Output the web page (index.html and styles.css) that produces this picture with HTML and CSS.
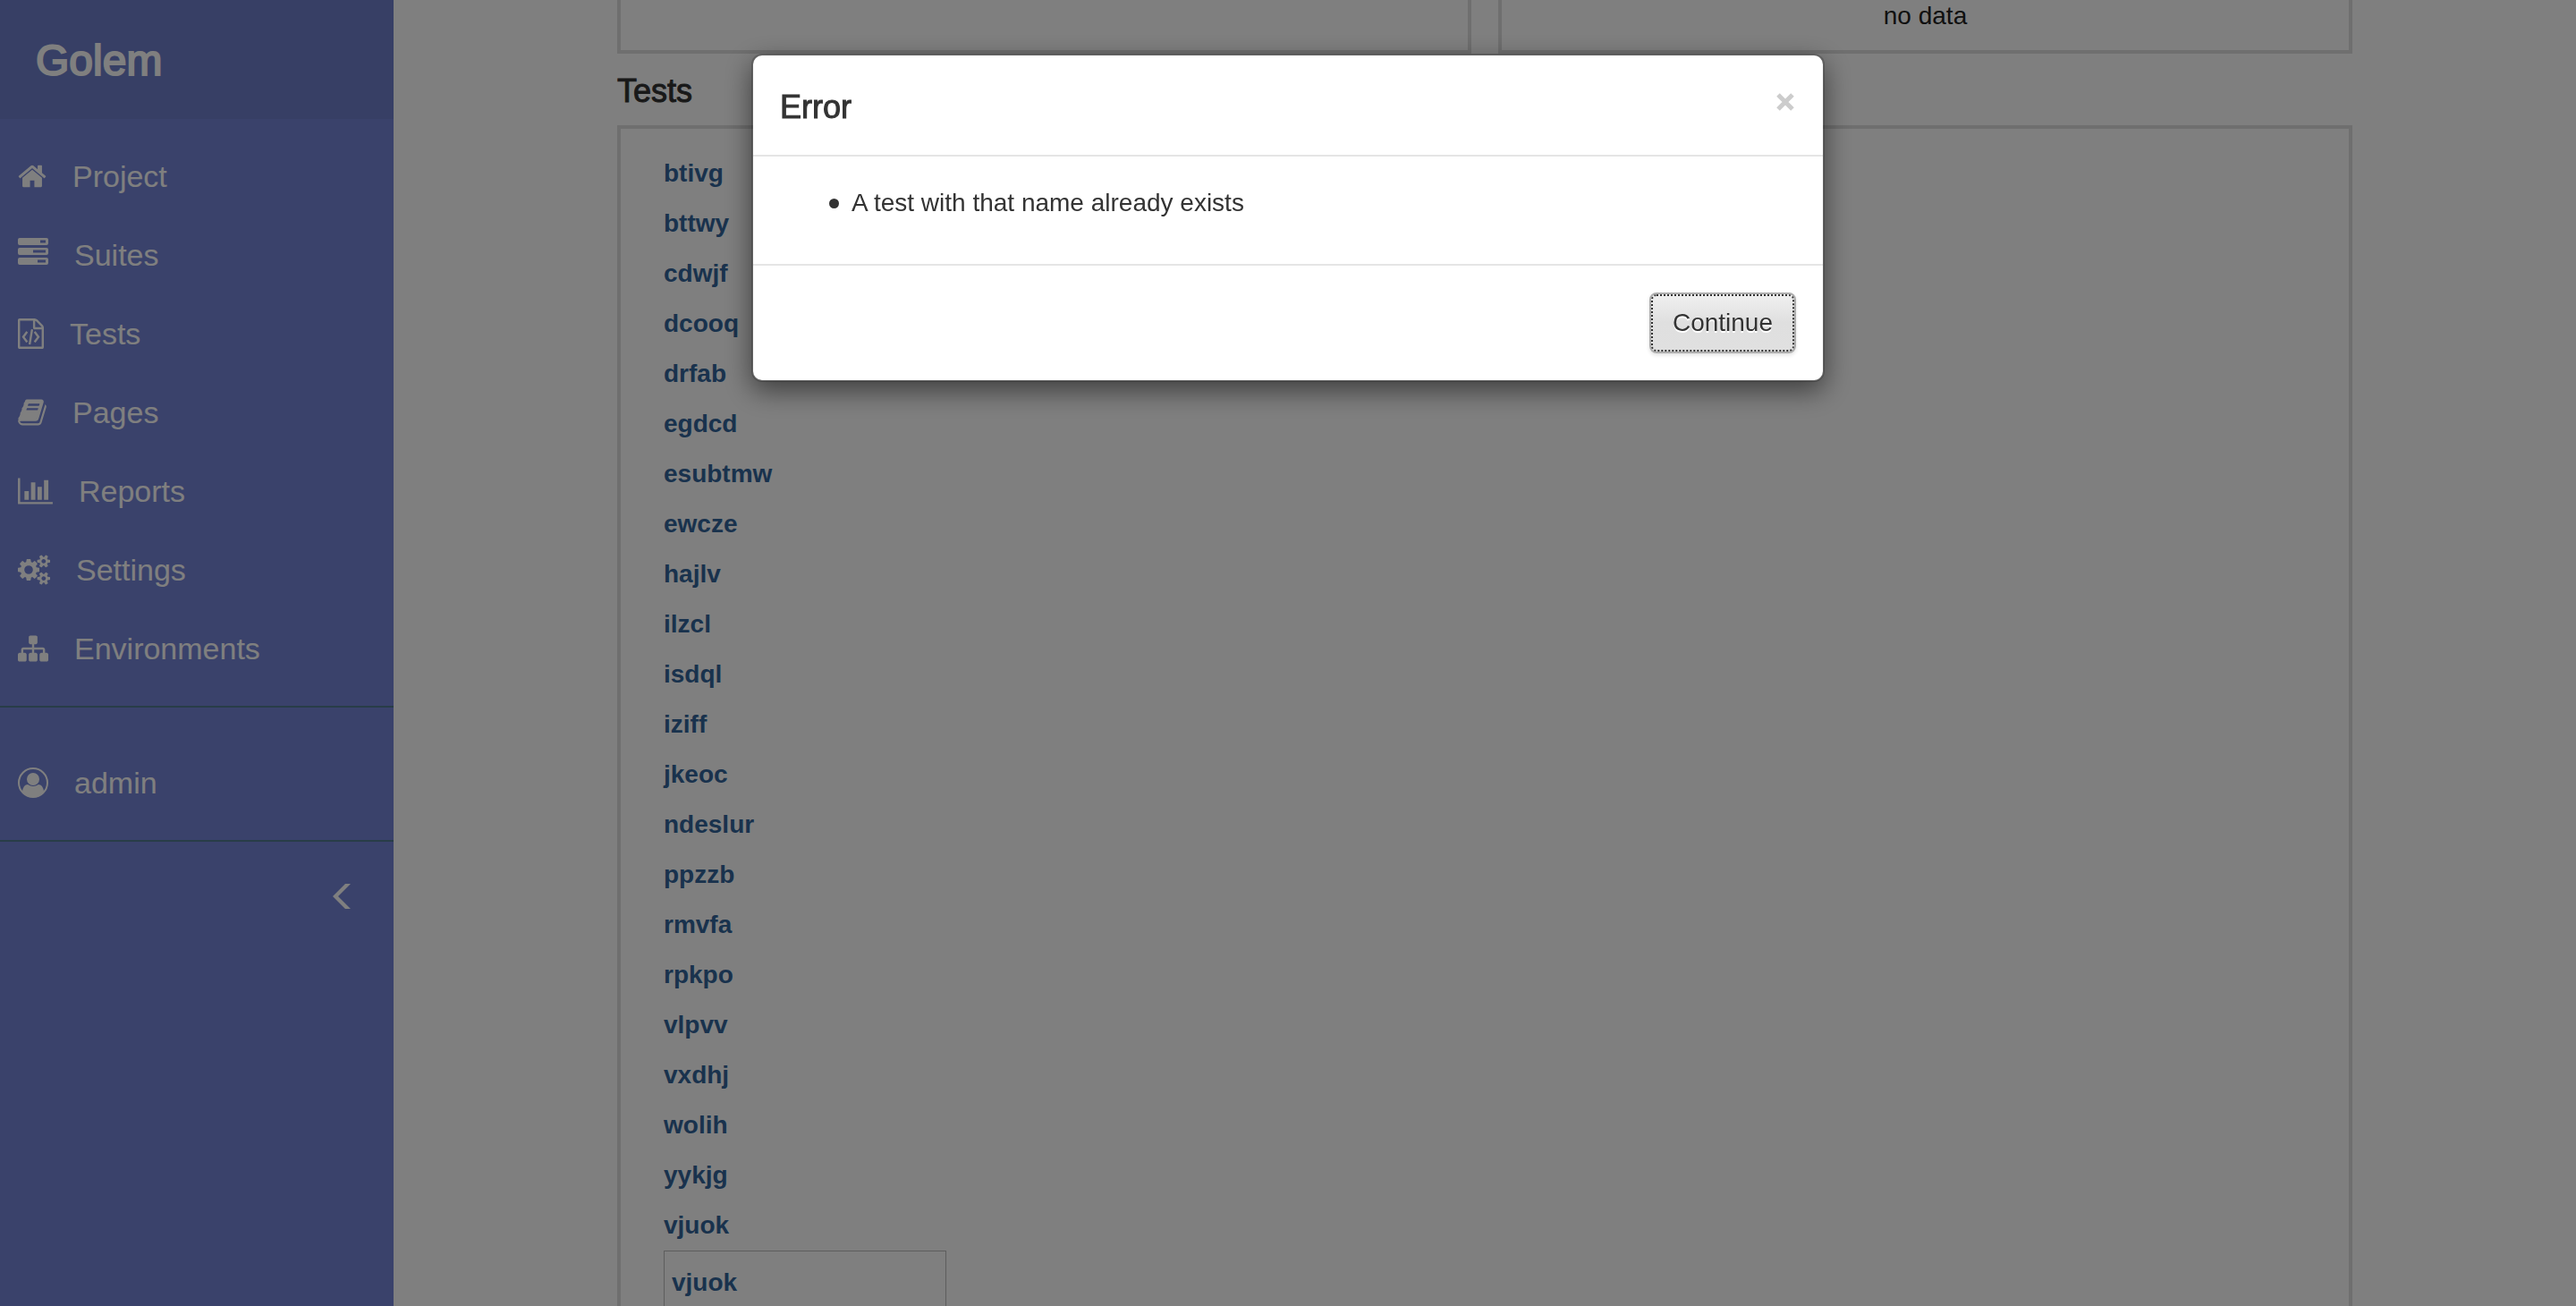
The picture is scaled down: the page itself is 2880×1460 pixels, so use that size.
FILE: index.html
```html
<!DOCTYPE html>
<html lang="en">
<head>
<meta charset="utf-8">
<title>Golem</title>
<meta name="viewport" content="width=device-width, initial-scale=1">
<link rel="stylesheet" href="styles.css">
</head>
<body>
<div class="app">
  <aside class="sidebar">
    <div class="brand">Golem</div>
    <ul class="nav">
      <li><a href="#"><svg width="32" height="34" viewBox="64 0 1664 1792"><path d="M1472 992v480q0 26-19 45t-45 19h-384v-384h-256v384h-384q-26 0-45-19t-19-45v-480q0-1 .5-3t.5-3l575-474 575 474q1 2 1 6zm223-69l-62 74q-8 9-21 11h-3q-13 0-21-7l-692-577-692 577q-12 8-24 7-13-2-21-11l-62-74q-8-10-7-23.5t11-21.5l719-599q32-26 76-26t76 26l244 204v-195q0-14 9-23t23-9h192q14 0 23 9t9 23v408l219 182q10 8 11 21.5t-7 23.5z"/></svg>Project</a></li>
      <li><a href="#"><svg width="34" height="42" viewBox="0 0 34 42"><path fill-rule="evenodd" d="M2 2h30a2 2 0 0 1 2 2v4a2 2 0 0 1-2 2h-30a2 2 0 0 1-2-2v-4a2 2 0 0 1 2-2zM25 4.500v3h6v-3zM2 13h30a2 2 0 0 1 2 2v4a2 2 0 0 1-2 2h-30a2 2 0 0 1-2-2v-4a2 2 0 0 1 2-2zM17 15.500v3h14v-3zM2 24h30a2 2 0 0 1 2 2v4a2 2 0 0 1-2 2h-30a2 2 0 0 1-2-2v-4a2 2 0 0 1 2-2zM22 26.500v3h9v-3z"/></svg>Suites</a></li>
      <li><a href="#"><svg width="29" height="34" viewBox="128 0 1536 1792"><path d="M1596 380q28 28 48 76t20 88v1152q0 40-28 68t-68 28h-1344q-40 0-68-28t-28-68v-1600q0-40 28-68t68-28h896q40 0 88 20t76 48zm-444-244v376h376q-10-29-22-41l-313-313q-12-12-41-22zm384 1528v-1024h-416q-40 0-68-28t-28-68v-416h-768v1536h1280zm-928-896q8-11 21-12.5t24 6.5l51 38q11 8 12.5 21t-6.5 24l-182 243 182 243q8 11 6.5 24t-12.5 21l-51 38q-11 8-24 6.5t-21-12.5l-226-301q-14-19 0-38zm802 301q14 19 0 38l-226 301q-8 11-21 12.5t-24-6.5l-51-38q-11-8-12.5-21t6.5-24l182-243-182-243q-8-11-6.5-24t12.5-21l51-38q11-8 24-6.5t21 12.5zm-620 461q-13-2-20.5-13t-5.5-24l138-831q2-13 13-20.5t24-5.5l63 10q13 2 20.5 13t5.5 24l-138 831q-2 13-13 20.5t-24 5.5z"/></svg>Tests</a></li>
      <li><a href="#"><svg width="32" height="34" viewBox="64 0 1664 1792"><path d="M1703 478q40 57 18 129l-275 906q-19 64-76.500 107.500t-122.500 43.500h-923q-77 0-148.500-53.500t-99.500-131.500q-24-67-2-127 0-4 3-27t4-37q1-8-3-21.500t-3-19.500q2-11 8-21t16.500-23.500 16.500-23.500q23-38 45-91.500t30-91.500q3-10 .5-30t-.5-28q3-11 17-28t17-23q21-36 42-92t25-90q1-9-2.500-32t.5-28q4-13 22-30.500t22-22.500q19-26 42.500-84.500t27.500-96.500q1-8-3-25.500t-2-26.500q2-8 9-18t18-23 17-21q8-12 16.500-30.500t15-35 16-36 19.500-32 26.500-23.500 36-11.500 47.500 5.500l-1 3q38-9 51-9h761q74 0 114 56t18 130l-274 906q-36 119-71.500 153.500t-128.500 34.500h-869q-27 0-38 15-11 16-1 43 24 70 144 70h923q29 0 56-15.500t35-41.500l300-987q7-22 5-57 38 15 59 43zm-1064 2q-4 13 2 22.500t20 9.500h608q13 0 25.500-9.500t16.500-22.500l21-64q4-13-2-22.500t-20-9.500h-608q-13 0-25.500 9.500t-16.500 22.500zm-83 256q-4 13 2 22.500t20 9.500h608q13 0 25.500-9.500t16.500-22.500l21-64q4-13-2-22.500t-20-9.500h-608q-13 0-25.500 9.500t-16.500 22.500z"/></svg>Pages</a></li>
      <li><a href="#"><svg width="39" height="34" viewBox="0 0 2048 1792"><path d="M640 896v512h-256v-512h256zm384-512v1024h-256v-1024h256zm1024 1152v128h-2048v-1536h128v1408h1920zm-640-896v768h-256v-768h256zm384-384v1152h-256v-1152h256z"/></svg>Reports</a></li>
      <li><a href="#"><svg width="36" height="34" viewBox="0 0 1920 1792"><path d="M896 896q0-106-75-181t-181-75-181 75-75 181 75 181 181 75 181-75 75-181zm768 512q0-52-38-90t-90-38-90 38-38 90q0 53 37.500 90.500t90.500 37.500 90.500-37.500 37.500-90.500zm0-1024q0-52-38-90t-90-38-90 38-38 90q0 53 37.500 90.500t90.500 37.500 90.500-37.500 37.500-90.500zm-384 421v185q0 10-7 19.500t-16 10.500l-155 24q-11 35-32 76 34 48 90 115 7 11 7 20 0 12-7 19-23 30-82.500 89.500t-78.500 59.500q-11 0-21-7l-115-90q-37 19-77 31-11 108-23 155-7 24-30 24h-186q-11 0-20-7.500t-10-17.500l-23-153q-34-10-75-31l-118 89q-7 7-20 7-11 0-21-8-144-133-144-160 0-9 7-19 10-14 41-53t47-61q-23-44-35-82l-152-24q-10-1-17-9.500t-7-19.500v-185q0-10 7-19.500t16-10.500l155-24q11-35 32-76-34-48-90-115-7-11-7-20 0-12 7-20 22-30 82-89t79-59q11 0 21 7l115 90q34-18 77-32 11-108 23-154 7-24 30-24h186q11 0 20 7.500t10 17.500l23 153q34 10 75 31l118-89q8-7 20-7 11 0 21 8 144 133 144 160 0 8-7 19-12 16-42 54t-45 60q23 48 34 82l152 23q10 2 17 10.500t7 19.500zm640 533v140q0 16-149 31-12 27-30 52 51 113 51 138 0 4-4 7-122 71-124 71-8 0-46-47t-52-68q-20 2-30 2t-30-2q-14 21-52 68t-46 47q-2 0-124-71-4-3-4-7 0-25 51-138-18-25-30-52-149-15-149-31v-140q0-16 149-31 13-29 30-52-51-113-51-138 0-4 4-7 4-2 35-20t59-34 30-16q8 0 46 46.500t52 67.500q20-2 30-2t30 2q51-71 92-112l6-2q4 0 124 70 4 3 4 7 0 25-51 138 17 23 30 52 149 15 149 31zm0-1024v140q0 16-149 31-12 27-30 52 51 113 51 138 0 4-4 7-122 71-124 71-8 0-46-47t-52-68q-20 2-30 2t-30-2q-14 21-52 68t-46 47q-2 0-124-71-4-3-4-7 0-25 51-138-18-25-30-52-149-15-149-31v-140q0-16 149-31 13-29 30-52-51-113-51-138 0-4 4-7 4-2 35-20t59-34 30-16q8 0 46 46.500t52 67.500q20-2 30-2t30 2q51-71 92-112l6-2q4 0 124 70 4 3 4 7 0 25-51 138 17 23 30 52 149 15 149 31z"/></svg>Settings</a></li>
      <li><a href="#"><svg width="34" height="34" viewBox="0 0 1792 1792"><path d="M1792 1248v320q0 40-28 68t-68 28h-320q-40 0-68-28t-28-68v-320q0-40 28-68t68-28h96v-192h-512v192h96q40 0 68 28t28 68v320q0 40-28 68t-68 28h-320q-40 0-68-28t-28-68v-320q0-40 28-68t68-28h96v-192h-512v192h96q40 0 68 28t28 68v320q0 40-28 68t-68 28h-320q-40 0-68-28t-28-68v-320q0-40 28-68t68-28h96v-192q0-52 38-90t90-38h512v-192h-96q-40 0-68-28t-28-68v-320q0-40 28-68t68-28h320q40 0 68 28t28 68v320q0 40-28 68t-68 28h-96v192h512q52 0 90 38t38 90v192h96q40 0 68 28t28 68z"/></svg>Environments</a></li>
    </ul>
    <ul class="nav nav-user">
      <li><a href="#"><svg width="34" height="34" viewBox="0 0 34 34"><circle cx="17" cy="17" r="16" fill="none" stroke="currentColor" stroke-width="2"/><circle cx="17" cy="13" r="7"/><path d="M5 27q1-8 6-8 6 4 12 0 5 0 6 8-5 6-12 6t-12-6z"/></svg>admin</a></li>
    </ul>
    <button class="collapse" type="button" aria-label="Collapse menu"><svg width="20" height="28" viewBox="0 0 20 28"><path d="M14 0h6l-14 14 14 14h-6l-14-14z"/></svg></button>
  </aside>

  <main class="content">
    <div class="row">
      <section class="box"></section>
      <section class="box"><p class="empty">no data</p></section>
    </div>
    <h4 class="title">Tests</h4>
    <section class="box box-tests">
      <ul class="tests">
        <li><a href="#">btivg</a></li>
        <li><a href="#">bttwy</a></li>
        <li><a href="#">cdwjf</a></li>
        <li><a href="#">dcooq</a></li>
        <li><a href="#">drfab</a></li>
        <li><a href="#">egdcd</a></li>
        <li><a href="#">esubtmw</a></li>
        <li><a href="#">ewcze</a></li>
        <li><a href="#">hajlv</a></li>
        <li><a href="#">ilzcl</a></li>
        <li><a href="#">isdql</a></li>
        <li><a href="#">iziff</a></li>
        <li><a href="#">jkeoc</a></li>
        <li><a href="#">ndeslur</a></li>
        <li><a href="#">ppzzb</a></li>
        <li><a href="#">rmvfa</a></li>
        <li><a href="#">rpkpo</a></li>
        <li><a href="#">vlpvv</a></li>
        <li><a href="#">vxdhj</a></li>
        <li><a href="#">wolih</a></li>
        <li><a href="#">yykjg</a></li>
        <li><a href="#">vjuok</a></li>
      </ul>
      <input class="new-test" type="text" value="vjuok" aria-label="New test name">
    </section>
  </main>
</div>

<div class="backdrop">
  <div class="modal" role="dialog" aria-modal="true" aria-labelledby="modal-title">
    <header class="modal-header">
      <h4 class="title" id="modal-title">Error</h4>
      <button class="close" type="button" aria-label="Close"><svg width="20" height="20" viewBox="0 0 20 20"><path d="M2 2l16 16M18 2l-16 16" stroke="currentColor" stroke-width="5"/></svg></button>
    </header>
    <div class="modal-body">
      <ul class="errors"><li>A test with that name already exists</li></ul>
    </div>
    <footer class="modal-footer">
      <button class="btn" type="button">Continue</button>
    </footer>
  </div>
</div>
</body>
</html>
```
FILE: styles.css
```css
* { box-sizing: border-box; }

html, body { height: 100%; }

body {
  margin: 0;
  overflow: hidden;
  background: #fff;
  color: #333;
  font: 28px/40px "Liberation Sans", Arial, sans-serif;
}

ul, h4, p { margin: 0; padding: 0; }
ul { list-style: none; }
a { color: inherit; text-decoration: none; }
button { font: inherit; cursor: pointer; }
svg { display: block; flex: none; fill: currentColor; }

.app { display: flex; height: 100%; }

/* Sidebar */
.sidebar {
  flex: none;
  width: 440px;
  background: #7484d6;
  color: #fff;
}

.brand {
  height: 133px;
  padding: 0 40px;
  background: #6e7eca;
  font-size: 48px;
  line-height: 136px;
  -webkit-text-stroke: 2px;
}

.nav {
  padding: 20px 0;
  border-bottom: 2px solid #507a90;
}
.nav-user { padding-top: 40px; }
.nav a {
  display: flex;
  align-items: center;
  gap: 29px;
  height: 88px;
  padding: 0 20px;
  font-size: 34px;
}

.collapse {
  display: block;
  margin: 47px 48px 0 auto;
  padding: 0;
  border: 0;
  background: none;
  color: inherit;
}

/* Content */
.content {
  flex: 1;
  height: 100%;
  padding: 0 250px;
  overflow: hidden;
}

.row {
  display: grid;
  grid-template-columns: 1fr 1fr;
  gap: 30px;
  height: 60px;
}

.box { border: 4px solid #dedede; }
.row .box { border-top: 0; }
.empty { line-height: 36px; text-align: center; color: #222; }

.title {
  font-size: 36px;
  font-weight: 400;
  line-height: 40px;
  -webkit-text-stroke: 1px;
}
.content .title { padding: 22px 0 18px; }

.box-tests { padding: 22px 48px; }
.tests li { height: 56px; }
.tests a,
.new-test {
  color: #33659a;
  font: bold 28px/56px "Liberation Sans", Arial, sans-serif;
}
.new-test {
  display: block;
  width: 316px;
  height: 72px;
  padding: 0 8px;
  border: 1px solid #bbb;
  background: transparent;
}

/* Dialog */
.backdrop {
  position: fixed;
  inset: 0;
  padding: 60px 20px;
  background: rgba(0, 0, 0, .5);
}

.modal {
  max-width: 1200px;
  margin: 0 auto;
  border: 2px solid rgba(0, 0, 0, .2);
  border-radius: 12px;
  background: #fff;
  background-clip: padding-box;
  box-shadow: 0 10px 30px rgba(0, 0, 0, .5);
}

.modal-header {
  display: flex;
  justify-content: space-between;
  padding: 38px 30px 33px;
  border-bottom: 2px solid #e5e5e5;
}

.close {
  align-self: flex-start;
  margin-top: 4px;
  padding: 0 2px;
  border: 0;
  background: none;
  color: #ccc;
}

.modal-body { padding: 32px 30px 48px; }
.errors { padding-left: 55px; }
.errors li {
  display: flex;
  align-items: center;
  gap: 14px;
}
.errors li::before {
  content: "";
  width: 11px;
  height: 11px;
  border-radius: 50%;
  background: #333;
}

.modal-footer {
  display: flex;
  justify-content: flex-end;
  padding: 30px;
  border-top: 2px solid #e5e5e5;
}

.btn {
  height: 68px;
  padding: 0 24px;
  border: 2px solid #adadad;
  border-radius: 8px;
  background: linear-gradient(#f0f0f0, #dfdfdf 50%, #e0e0e0);
  box-shadow: 0 2px 4px rgba(0, 0, 0, .12);
  color: #333;
  text-shadow: 0 2px 0 #fff;
  outline: 2px dotted #333;
  outline-offset: -4px;
}
```
